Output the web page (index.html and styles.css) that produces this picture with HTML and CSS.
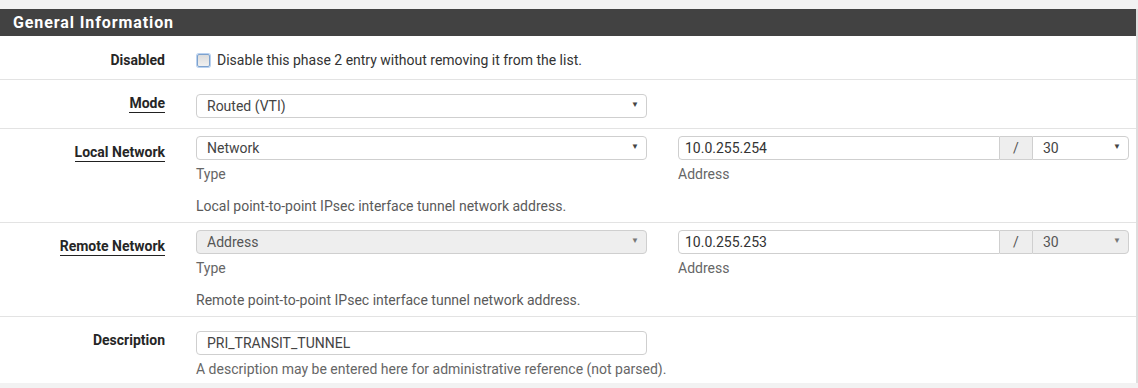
FILE: index.html
```html
<!DOCTYPE html>
<html lang="en">
<head>
  <meta charset="UTF-8" />
  <title>Phase 2 - General Information</title>
  <link rel="stylesheet" href="styles.css">
</head>
<body>
  <div class="panel">
    <h2 class="panel-title">General Information</h2>

    <!-- Disabled -->
    <div class="row row-check">
      <label class="row-label">Disabled</label>
      <div class="row-control wide">
        <label class="check"><input type="checkbox" /> Disable this phase 2 entry without removing it from the list.</label>
      </div>
    </div>

    <!-- Mode -->
    <div class="row row-tall">
      <label class="row-label"><span class="uline">Mode</span></label>
      <div class="row-control">
        <span class="select-wrap">
          <select><option>Routed (VTI)</option></select>
        </span>
      </div>
    </div>

    <!-- Local Network -->
    <div class="row row-net">
      <label class="row-label"><span class="uline">Local Network</span></label>
      <div class="row-control">
        <span class="select-wrap">
          <select><option>Network</option></select>
        </span>
        <div class="hint">Type</div>
      </div>
      <div class="row-control">
        <div class="input-group">
          <input type="text" value="10.0.255.254" />
          <span class="addon">/</span>
          <span class="select-wrap mask">
            <select><option>30</option></select>
          </span>
        </div>
        <div class="hint">Address</div>
      </div>
      <div class="help">Local point-to-point IPsec interface tunnel network address.</div>
    </div>

    <!-- Remote Network -->
    <div class="row row-net">
      <label class="row-label"><span class="uline">Remote Network</span></label>
      <div class="row-control">
        <span class="select-wrap disabled">
          <select disabled><option>Address</option></select>
        </span>
        <div class="hint">Type</div>
      </div>
      <div class="row-control">
        <div class="input-group">
          <input type="text" value="10.0.255.253" />
          <span class="addon">/</span>
          <span class="select-wrap mask disabled">
            <select disabled><option>30</option></select>
          </span>
        </div>
        <div class="hint">Address</div>
      </div>
      <div class="help">Remote point-to-point IPsec interface tunnel network address.</div>
    </div>

    <!-- Description -->
    <div class="row row-tall last">
      <label class="row-label">Description</label>
      <div class="row-control">
        <input type="text" class="text" value="PRI_TRANSIT_TUNNEL" />
        <div class="hint nowrap">A description may be entered here for administrative reference (not parsed).</div>
      </div>
    </div>
  </div>
</body>
</html>
```

FILE: styles.css
```css
body {
  margin: 0;
  background: #f2f2f2;
  font-family: 'Roboto', 'Liberation Sans', sans-serif;
  font-size: 14px;
  color: #212121;
}

.panel {
  margin-top: 9px;
  width: 1136px;
  background: #fff;
  border-right: 2px solid #dedede;
}

.panel-title {
  margin: 0;
  height: 27px;
  line-height: 27px;
  padding-left: 13px;
  background: #424242;
  color: #fff;
  font-size: 16px;
  font-weight: bold;
  letter-spacing: 0.9px;
}

.row {
  display: grid;
  grid-template-columns: 165px 451px 451px;
  column-gap: 31px;
  align-content: start;
  border-bottom: 1px solid #e3e3e3;
}

.row.last {
  border-bottom: none;
  height: 66px;
}

.row-label {
  padding-top: 14px;
  text-align: right;
  font-weight: bold;
  line-height: 18px;
  color: #262626;
}

.uline {
  border-bottom: 1px solid #212121;
  padding-bottom: 1px;
}

.row-check {
  height: 43px;
}

.row-check .row-label {
  padding-top: 15px;
}

.row-control.wide {
  grid-column: 2 / 4;
  padding-top: 15px;
}

.check {
  display: flex;
  align-items: center;
  gap: 7px;
  line-height: 18px;
  color: #333;
}

.check input {
  margin: 0 0 0 1px;
  width: 13px;
  height: 13px;
  appearance: none;
  border: 1px solid #7da2ce;
  border-radius: 2px;
  background: linear-gradient(#dcdcdc, #f0f0f0);
  box-shadow: 0 0 0 1px #b9d1f0;
}

.row-tall {
  height: 48px;
}

.row-tall .row-control {
  padding-top: 14px;
}

.row-net {
  height: 93px;
}

.row-net .row-control {
  padding-top: 7px;
}

.row-net .help {
  grid-column: 2 / 4;
  padding-top: 14px;
  line-height: 18px;
  color: #5a5a5a;
}

.select-wrap {
  position: relative;
  display: block;
}

.select-wrap::after {
  content: "\25BC";
  position: absolute;
  right: 8px;
  top: 6px;
  font-size: 8px;
  color: #444;
  pointer-events: none;
}

select,
input[type="text"] {
  display: block;
  width: 100%;
  height: 24px;
  box-sizing: border-box;
  margin: 0;
  padding: 0 10px;
  border: 1px solid #cfcfcf;
  border-radius: 4px;
  background: #fff;
  font-family: inherit;
  font-size: 14px;
  color: #444;
  appearance: none;
}

.text {
  padding-left: 7px;
  color: #333;
}

.select-wrap.disabled select {
  background: #eee;
  color: #555;
  opacity: 1;
}

.select-wrap.disabled::after {
  color: #777;
}

.input-group {
  display: flex;
}

.input-group input {
  flex: 1;
  border-radius: 4px 0 0 4px;
  padding-left: 6px;
  color: #333;
}

.addon {
  width: 32px;
  height: 24px;
  box-sizing: border-box;
  border-top: 1px solid #cfcfcf;
  border-bottom: 1px solid #cfcfcf;
  background: #eee;
  text-align: center;
  line-height: 22px;
  color: #555;
}

.select-wrap.mask {
  width: 97px;
}

.select-wrap.mask select {
  border-radius: 0 4px 4px 0;
}

.hint {
  margin-top: 5px;
  line-height: 18px;
  color: #666;
}

.hint.nowrap {
  white-space: nowrap;
}
```
